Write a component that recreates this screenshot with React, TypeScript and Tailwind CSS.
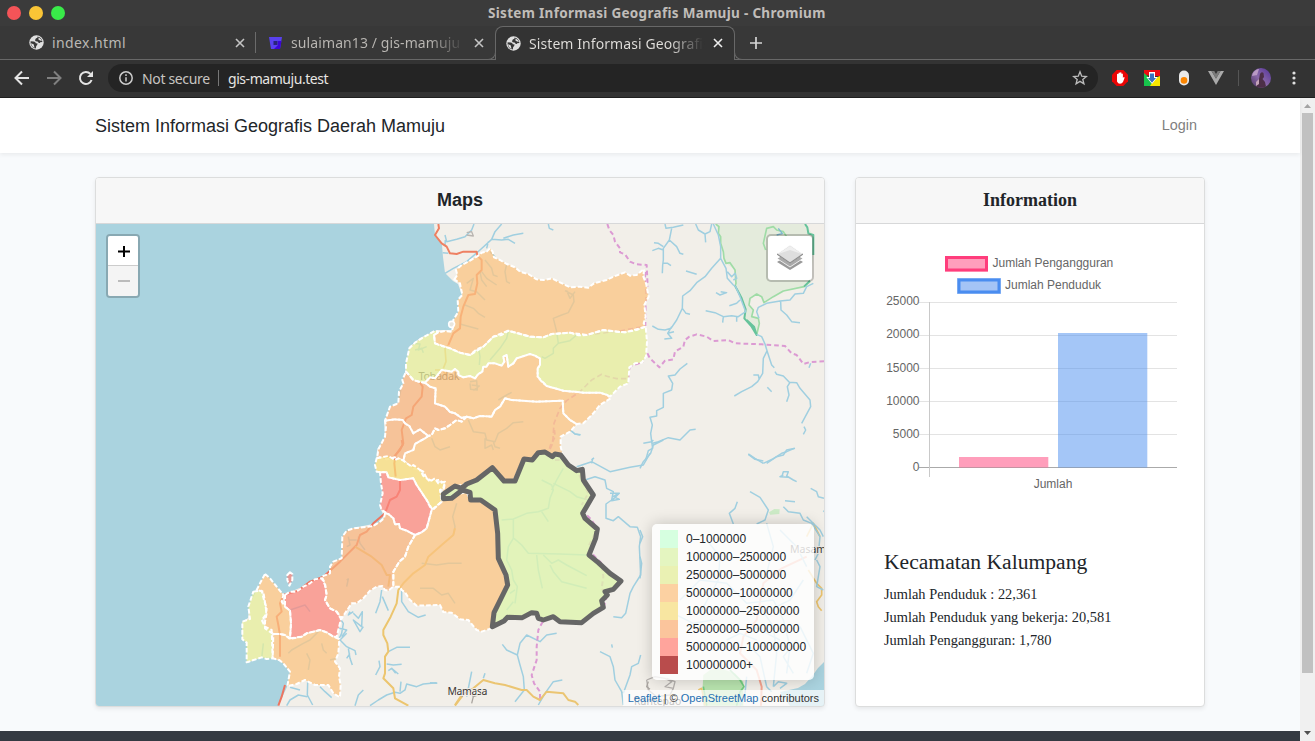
import React from 'react';

const ui = "font-['Noto_Sans',sans-serif]";
const sans = "font-['Liberation_Sans',Arial,sans-serif]";
const serif = "font-['Liberation_Serif','Times_New_Roman',serif]";

const pts = (s: string) => 'M' + s.trim().split(/\s+/).join('L');

const ORANGE = '#fbc481';
const LIME = '#e5ee9a';
const SALMON = '#f7b47d';
const YELLOW = '#f7dc7a';
const RED = '#fb877e';

const north: [string, string][] = [
  [ORANGE, '253,178 262,165 258,150 275,135 300,122 325,107 335,98 350,95 360,85 368,95 372,112 390,120 410,132 435,142 450,155 475,162 500,178 522,180 545,175 570,187 600,202 630,200 655,203 672,190 710,180 730,170 765,157 780,167 800,165 822,147 820,170 828,190 836,230 823,255 827,290 821,310 827,320 800,330 765,337 740,335 700,330 680,336 650,345 625,346 600,338 545,342 520,352 480,350 445,340 415,332 395,345 370,350 340,380 320,388 300,405 270,398 240,385 210,376 195,370 192,345 205,337 225,333 245,335 250,318 250,300 265,275 263,240 277,225 270,190'],
  [LIME, '192,345 195,370 240,385 270,398 300,405 340,380 370,350 415,332 480,350 520,352 545,342 600,338 650,345 700,330 765,337 827,320 831,365 828,410 815,428 795,430 778,442 775,490 750,500 735,515 720,530 712,525 690,518 640,518 580,512 530,498 515,485 503,470 503,445 510,435 510,415 495,407 480,402 440,415 430,430 415,440 410,405 400,410 403,425 395,437 375,430 355,430 350,440 340,440 337,455 325,462 315,475 300,468 280,472 265,465 265,455 255,447 245,455 215,450 195,475 180,472 165,488 150,486 130,480 108,455 108,430 118,385 135,368 155,355 195,332 205,335'],
  [ORANGE, '165,488 180,472 195,475 215,450 245,455 255,447 265,455 265,465 280,472 300,468 315,475 325,462 337,455 340,440 350,440 355,430 375,430 395,437 403,425 400,410 410,405 415,440 430,430 440,415 480,402 495,407 510,415 510,435 503,445 503,470 530,498 580,512 640,518 690,518 712,525 722,535 690,555 670,580 640,610 620,612 600,600 580,580 578,542 500,545 425,540 405,535 390,560 375,570 365,590 330,588 310,595 290,590 275,594 255,580 240,576 225,560 195,550 197,505 180,500'],
  [ORANGE, '290,590 310,595 330,588 365,590 375,570 390,560 405,535 425,540 500,545 578,542 580,580 600,600 620,612 600,635 572,650 572,680 578,705 545,710 520,695 485,720 460,715 430,783 402,783 367,745 320,780 290,790 255,800 220,830 212,845 218,820 225,790 205,780 190,785 170,775 160,755 150,750 130,745 100,722 105,700 130,690 135,672 165,655 175,648 185,645 195,625 205,630 225,625 240,615 260,600 275,605'],
  [SALMON, '108,455 130,480 150,486 165,488 180,500 197,505 195,550 225,560 240,576 255,580 275,594 290,590 275,605 260,600 240,615 225,625 205,630 195,625 185,645 175,648 150,628 130,640 118,618 105,610 98,600 75,598 45,602 60,560 85,550 87,515 100,490 97,480'],
  [SALMON, '45,602 75,598 98,600 105,610 118,618 130,640 150,628 175,648 165,655 135,672 130,690 105,700 100,722 75,712 50,718 22,710 25,688 45,650 48,620'],
];

const south: [string, string][] = [
  [YELLOW, '440,55 475,48 495,60 505,55 520,62 545,80 550,75 570,90 580,108 590,115 600,125 615,115 625,130 645,125 640,145 630,150 635,185 608,210 590,180 570,150 560,135 550,115 510,120 475,112 470,97 440,95 435,75'],
  [RED, '450,97 470,97 475,112 510,120 550,115 560,135 570,150 590,180 605,210 590,265 575,277 555,285 530,272 510,265 507,252 495,253 490,235 475,222 455,210 450,195 458,160 453,130'],
  [SALMON, '465,220 475,222 490,235 495,253 507,252 510,265 530,272 555,285 535,320 525,350 508,365 490,395 490,440 475,452 465,450 457,438 440,440 420,452 400,475 380,490 365,490 335,535 320,515 300,505 285,480 290,465 285,430 275,410 300,400 300,380 310,365 335,355 337,290 350,272 370,265 430,258 450,245 462,235'],
  [ORANGE, '555,285 575,277 590,265 605,210 635,185 640,178 710,155 720,180 750,182 795,210 805,355 835,435 795,515 785,565 755,575 740,570 715,540 690,538 665,518 640,516 630,495 560,497 540,480 525,457 515,450 510,440 490,440 490,395 508,365 525,350 535,320'],
  [RED, '165,465 180,455 200,455 220,440 240,430 255,418 275,415 285,435 290,465 285,480 300,505 320,515 333,537 320,590 310,590 290,577 270,570 230,580 215,590 180,595 183,550 180,512 165,500'],
  [ORANGE, '105,402 120,415 140,440 160,465 155,485 165,500 180,512 183,550 180,595 165,585 150,582 130,582 105,565 105,545 110,520 100,455 80,450 90,430'],
  [LIME, '70,455 95,452 102,480 110,505 107,525 95,540 105,560 125,570 128,655 110,657 95,652 50,667 50,608 37,598 37,545 60,537 55,500'],
  [ORANGE, '130,582 150,582 165,585 180,597 215,590 230,580 270,570 290,577 310,590 328,597 325,640 315,665 330,685 327,710 332,735 330,772 310,760 295,735 255,735 225,720 200,732 172,738 180,695 160,670 148,660 128,655'],
  [RED, '180,397 172,405 172,420 178,437 187,420 187,402'],
];

const riversNorth = [
  '225,45 230,65 260,58 285,50 305,30 312,12', '225,75 226,60', '395,12 375,35 365,58 330,90 290,125 250,145 225,160',
  '365,58 395,60 415,58 435,70', '400,55 430,45 460,40', '355,65 350,85', '535,12 538,25 550,30', '375,110 360,95', '218,98 235,100',
  '345,120 365,145 370,165 383,170', '410,132 405,155 410,185 420,190', '335,155 350,175 380,195', '330,155 335,180 350,200', '290,190 310,175 300,210 320,215 345,240',
  '285,255 310,265 325,280 345,292', '270,312 300,320 325,327', '585,212 610,225 612,245 595,278 575,285 550,295 560,335 565,370', '590,212 600,235 615,215',
  '565,370 550,385 550,400 525,415 515,410', '565,370 600,362 620,345', '415,332 410,355 390,385 360,420', '325,380 330,410 328,435',
  '125,370 150,372 145,390 170,380', '135,390 155,385 160,398', '295,600 310,635 345,640 350,660 375,665 385,640 410,625 430,608 460,605', '345,655 345,685 365,675 370,690', '370,665 375,680 390,685',
  '185,655 195,680 210,690 240,680', '385,540 410,525 425,517', '300,485 320,482 322,510 302,508 300,490', '305,495 328,498 310,512', '600,630 615,642 630,645', '665,720 672,713',
];
const riversEast = [
  '195,12 198,25 220,22 250,15', '215,25 208,60 190,85 190,120 188,135 187,160', '208,60 230,80 240,100 250,103', '190,90 175,85 157,92', '190,80 175,70 162,68', '190,130 203,130 213,137',
  '287,12 295,30 315,42 330,35 335,12', '315,42 317,67', '340,12 355,45 362,80 362,115 335,145 315,170 290,188 270,212 248,228 247,265 230,300 213,325 195,330 175,328 157,318', '247,265 258,280 270,283', '215,320 203,340 215,355 193,357', '203,340 222,335',
  '362,115 378,145 382,175 400,195 407,200 420,230 437,275 415,290 395,287 370,290 345,278 317,272', '382,155 395,170 405,160 410,175 400,180', '370,290 368,308', '410,292 410,305', '348,218 360,225 380,218 362,215', '258,153 290,163', '388,257 410,250 420,240',
  '470,343 485,350 495,372 502,395 515,435 523,443', '500,395 490,415 488,460 473,485 455,500 425,515 403,528', '478,480 475,465 460,465', '477,295 470,275 475,262 500,250 540,243 570,240 585,222 610,220 620,200 640,190', '542,245 543,270 560,285 575,305 600,308',
  '525,455 530,463 550,468 568,487 590,488 600,505 630,540 632,560 605,610', '570,487 562,500 567,525 560,545', '612,620 617,630 610,643', '502,502 515,515', '627,443 632,430',
  '262,430 240,447 225,465 205,468 218,490 215,510 190,520 190,545 190,562 170,572 170,588 150,592 157,615 152,640 155,665 158,685 145,692 137,720', '158,670 175,665 205,653 240,660 270,630 287,628',
  '445,703 465,718 490,723', '583,685 560,695 545,700 520,716 490,730',
];
const riversSouth = [
  '455,450 450,485 437,520', '457,470 475,512', '515,450 515,485 535,515 565,532 587,525', '330,535 340,550 335,580 325,600', '350,580 330,600 350,620 375,632 378,645', '355,625 360,655 367,675', '360,640 350,655', '370,515 355,525 360,515', '370,520 385,535 397,515 395,560 370,540 390,575 400,560', '327,565 350,570 335,590',
  '540,622 500,622 475,635', '470,672 490,675 515,673', '475,692 485,685 505,702', '485,685 497,700', '447,662 450,680 437,705', '180,742 210,750', '233,725 232,765 248,795', '232,770 205,765 180,780 170,797', '270,740 285,755 305,773', '400,750 385,765 375,797', '620,728 580,732 560,740 530,732 525,750 510,760 495,757 470,765 445,780 420,797', '510,755 513,725',
  '355,290 360,315 350,320', '355,300 380,300', '385,290 390,310 405,330', '350,440 355,417 350,420', '680,190 668,230 675,260 670,285', '575,370 620,375 655,370 695,370', '570,445 610,445 635,465 655,460 675,490', '175,640 185,630 220,610 240,600 270,570', '275,610 280,630 290,640', '300,660 320,655', '235,690 240,660 230,640', '180,510 225,495 240,515', '100,610 95,655',
];
const riversCentre = [
  '335,150 365,165 370,180 360,205 355,235 325,245 290,250 250,267 215,270', '365,180 380,150 400,115', '370,160 420,185 440,200 475,210', '335,245 355,275', '250,267 250,325 235,350 230,390 245,420 250,450 262,470 255,520', '252,325 275,345 295,370 390,372 470,375', '320,375 325,420 337,475', '340,375 365,400 385,390 410,405 470,437', '360,405 370,425 395,455 470,475', '255,480 240,490', '250,515 230,540',
  '425,3 435,12 452,14', '440,110 485,95 540,125 600,112 640,105 660,70', '488,85 485,100', '465,150 495,140 525,150 530,175 550,185 545,210 528,222 528,265 550,272 565,260 600,290 622,292 632,320 628,350 630,390 632,435 610,470 600,490 587,550 575,563 550,560', '540,190 568,190 545,212 568,208 550,200 565,190',
  '217,643 230,660 262,675 270,705 280,740 283,780 255,815', '262,675 270,640 290,615 330,635 350,615 380,610', '397,750 370,755 345,790 325,825', '510,665 540,680 550,710 555,750 575,785 580,825', '632,675 625,700 605,710 600,735 580,790', '545,643 547,653', '0,758 22,760', '165,730 160,745', '125,725 120,750 110,800', '40,190 75,200',
];
const riversCorner = [
  '10,10 35,5 40,0', '0,85 10,65 32,40 40,15 70,0', '325,42 345,55 370,70', '380,70 410,50 430,45 440,30 465,25', '425,112 430,95 445,95 440,108 460,120 470,125', '430,105 420,110 445,112', '330,155 360,172 385,210 375,240 350,252', '292,185 285,205 268,220 280,252', '435,182 465,185', '512,145 530,155 535,170 552,175', '430,200 445,215 480,220 490,240 515,250 540,290 535,340 525,360', '550,215 555,210',
  '0,270 8,290 0,310', '0,350 5,370 0,415', '120,480 180,420 260,430 320,490 400,480', '200,300 240,350 235,420 180,520', '380,250 400,320 380,400', '400,480 430,540 450,620 440,700', '360,500 400,560 410,640 400,740', '480,560 520,640 500,700', '470,600 430,650 460,700', '490,420 450,480 410,500', '330,620 360,650 380,740', '340,560 420,600', '100,520 160,550 220,540', '260,600 300,580 350,600', '380,740 395,755', '320,710 315,760 300,797', '400,740 415,725 440,730 420,745', '530,360 540,380 530,440 550,450', '500,230 540,270 550,290', '420,270 470,320 500,380',
];

function Strokes({ lines, color, width, dash }: { lines: string[]; color: string; width: number; dash?: string }) {
  return <path d={lines.map(pts).join('')} fill="none" stroke={color} strokeWidth={width} strokeDasharray={dash} strokeLinejoin="round" />;
}

function Regions({ items }: { items: [string, string][] }) {
  return (
    <>
      {items.map(([fill, s], i) => (
        <path key={i} d={pts(s) + 'Z'} fill={fill} fillOpacity={0.74} />
      ))}
      {items.map(([, s], i) => (
        <path key={i} d={pts(s) + 'Z'} fill="none" stroke="white" strokeWidth={6} strokeDasharray="14 6" strokeLinejoin="round" />
      ))}
    </>
  );
}

function MapDrawing() {
  const N = 'translate(370 220) scale(.33333)';
  const E = 'translate(600 220) scale(.33333)';
  const S = 'translate(230 440) scale(.33333)';
  const C = 'translate(430 430) scale(.33333)';
  const K = 'translate(640 440) scale(.33333)';
  const water = '#a0cfe0';
  const purple = '#dc9ad3';
  return (
    <svg className="block h-full w-full" viewBox="96 224 728 482">
      <rect x="96" y="224" width="728" height="482" fill="#f2efe9" />
      <path
        fill="#aad3df"
        d={pts('96,224 434,224 435,235 442,245 443,257 445,273 453,281 458,284 462,295 458,300 458,313 454,320 452,330 437,330 420,338 409,347 406,367 403,383 399,402 390,407 384,422 385,437 377,450 376,470 381,473 383,493 380,508 384,516 378,523 353,528 343,535 342,557 333,563 330,572 323,578 310,582 302,587 285,594 282,593 265,574 257,590 250,603 248,618 242,622 242,638 247,643 247,663 262,657 273,658 283,663 290,672 287,687 278,706 96,706') + 'Z'}
      />
      <path fill="#aad3df" d={pts('824,662 818,668 813,675 805,684 798,688 780,692 790,706 824,706') + 'Z'} />

      <g transform={E}>
        <path d={pts('347,12 357,40 362,70 370,95 378,130 405,150 408,190 425,235 437,268 433,295 470,345 478,310 470,290 455,290 460,270 447,255 450,235 470,222 485,230 492,248 520,230 550,213 612,200 632,180 640,100 640,45 615,12') + 'Z'} fill="#e4ebdc" />
        <Strokes lines={['347,12 357,20 355,40 362,50 362,70 370,95 372,115 378,130 390,128 405,150 408,190 405,200', '470,345 478,310 475,295 455,290 460,270 447,255 450,235 470,222 485,230 492,248 520,230 550,213 612,200 630,185', '497,90 490,70 500,25 520,20 530,30 550,35 560,50']} color="#9fdca6" width={5} />
        <Strokes lines={['405,197 412,210 425,235 437,268 433,295 455,320 470,345 462,320 440,300', '630,182 612,200', '615,12 622,22 625,40 640,45 640,105']} color="#66c39b" width={6} />
        <Strokes lines={['535,25 548,42', '530,45 548,40']} color="#80b9d0" width={4} />
      </g>
      <g transform={K}>
        <path d={pts('190,705 210,690 240,685 285,700 310,725 310,797 190,797 188,740') + 'Z'} fill="#b8e3ae" />
        <Strokes lines={['270,690 300,720 312,740 300,755 290,797', '190,740 200,797']} color="#72cc80" width={5} />
        <path d="M387 217L403 207L419 208L418 222L390 224Z" fill="#cdebc7" />
        <Strokes lines={['20,720 45,710 75,715 95,725 75,740 100,745 90,765 50,770 25,750 20,720', '80,715 105,725 100,745']} color="#b4b0ad" width={4} />
        <Strokes lines={['500,290 520,250 540,290', '505,390 530,430 545,445 545,465 530,485 535,500 545,512', '175,750 185,745 195,797']} color="#edc56f" width={5} />
        <Strokes lines={['500,350 425,385 370,430 350,540 310,590 300,640 350,690 365,740 363,797']} color="#f3a38e" width={6} />
      </g>

      <g transform={N}><Strokes lines={riversNorth} color={water} width={4.5} /></g>
      <g transform={E}><Strokes lines={riversEast} color={water} width={4.5} /></g>
      <g transform={S}><Strokes lines={riversSouth} color={water} width={4.5} /></g>
      <g transform={C}><Strokes lines={riversCentre} color={water} width={4.5} /></g>
      <g transform={K}><Strokes lines={riversCorner} color={water} width={4.5} /></g>

      <g transform={N}>
        <Strokes lines={['205,12 207,25 195,45 215,70 230,80 240,100 260,102 280,95 320,95 322,107 335,120 335,150 320,165 322,190 315,222 295,225 280,260 272,290 270,325 250,340 235,375', '150,488 158,500 155,530 130,560 125,585 108,595 95,630 100,670 90,690 72,710']} color="#ee8062" width={6} />
        <Strokes lines={['235,375 225,385 228,425 220,445', '195,450 215,450 230,465']} color="#f1b96e" width={5} />
        <Strokes lines={['290,45 310,48 305,35 290,38']} color="#b9b5b1" width={4} />
        <Strokes lines={['530,710 548,670 552,610 570,565 590,542 630,515 665,480 695,463 715,470 740,476 775,476 780,440 820,425']} color={purple} width={5} dash="16 9" />
        <Strokes lines={['650,345 735,335 827,318 828,230 826,150']} color={purple} width={4} dash="16 9" />
      </g>
      <g transform={E}>
        <Strokes lines={['22,12 28,30 40,45 45,65 60,85 60,97 75,103 90,125 110,133 140,135 143,200', '142,400 150,415 178,442 195,422 220,418 225,395 250,380 255,360 268,350 290,343 320,350 340,363 385,360 405,370 485,373 555,378 575,400 590,405 610,432 630,426 672,424']} color={purple} width={6} dash="14 9" />
      </g>
      <g transform={S}>
        <Strokes lines={['515,0 518,15 497,45 493,70 497,110', '510,120 510,150 500,170 480,180 465,220 430,250 410,275 390,285 380,315 345,350 330,365 280,410 240,425 205,452 160,465 150,490 155,515 140,530 145,555 150,585 150,650', '165,735 155,770 145,797']} color="#ed7560" width={6} />
        <Strokes lines={['375,320 425,350 455,375 470,405 480,405 475,440', '675,265 670,285 635,315 595,350 585,375 550,400 520,430 505,450 500,490 482,530 460,570 460,585 472,610 475,635 465,650 465,700 460,715 490,745 495,775 535,797', '675,797 697,768']} color="#ecc56e" width={6} />
      </g>
      <g transform={C}>
        <Strokes lines={['373,0 375,20 362,45 355,70', '338,575 325,600 320,650 320,690 305,735 312,760 330,785 330,815', '455,240 485,270 502,297 475,350 490,375 515,400 520,440 515,475 530,500 520,535', '375,90 400,90 440,120 475,190 455,225']} color={purple} width={6} dash="14 9" />
        <Strokes lines={['75,825 95,795 130,775 160,750 195,760 225,765 275,780 290,780 310,800 330,810 350,785 400,790 415,810 435,815 445,825']} color="#ebc572" width={6} />
        <Strokes lines={['120,785 130,800 125,820', '130,800 158,790', '120,775 95,800', '655,755 650,770 660,778']} color="#aaa5a0" width={4} />
      </g>

      <text x="418.5" y="380" fontSize="11" fill="#48423d" fontFamily="Noto Sans, sans-serif" textLength="41">Tobadak</text>
      <g transform={N}>
        <Regions items={north} />
        <path d="M237 318q-4-15 10-14q12 6 3 16q-9 5-13-2" fill="#e9e6de" stroke="white" strokeWidth="5" />
      </g>
      <g transform={S}><Regions items={south} /></g>
      <g transform={C}>
        <path
          d={pts('40,192 75,168 95,175 110,162 140,150 187,113 222,153 255,153 282,87 307,90 325,68 345,66 367,80 375,72 392,75 415,105 440,122 457,118 460,150 490,195 458,250 465,265 502,297 497,325 477,375 505,398 540,430 573,453 550,478 525,485 532,495 515,512 520,532 490,550 455,578 390,575 370,560 340,570 325,565 320,550 305,548 277,563 232,562 222,573 187,590 192,548 233,465 228,435 205,385 203,310 195,240 152,210 122,210 120,187 97,180 65,205 40,206') + 'Z'}
          fill="#ddf4ae" fillOpacity=".8" stroke="#666" strokeWidth="15" strokeLinejoin="round"
        />
      </g>
      <g fontFamily="Noto Sans, sans-serif" fontSize="10.5" fill="#3c3937" stroke="#f2efe9" strokeWidth="2" paintOrder="stroke">
        <text x="447.5" y="694.5" textLength="40">Mamasa</text>
        <text x="790" y="552.5">Masam</text>
        <text x="634" y="704.5">Rantepao</text>
      </g>
    </svg>
  );
}

const legend: [string, string][] = [
  ['bg-[#d6ffe0]', '0–1000000'],
  ['bg-[#e4f5c0]', '1000000–2500000'],
  ['bg-[#eaf1b3]', '2500000–5000000'],
  ['bg-[#fcd1a2]', '5000000–10000000'],
  ['bg-[#f8e6a1]', '10000000–25000000'],
  ['bg-[#fbc59c]', '25000000–50000000'],
  ['bg-[#ffa49c]', '50000000–100000000'],
  ['bg-[#b94c4c]', '100000000+'],
];

function MapPanel() {
  return (
    <section className="flex h-[530px] w-[730px] flex-col overflow-hidden rounded border border-[#dcdddd] bg-white shadow-[0_2px_4px_rgba(0,0,0,0.075)]">
      <h2 className="flex h-[46px] shrink-0 items-center justify-center border-b border-[#d7d8d9] bg-[#f7f7f7] text-[18px] font-bold">Maps</h2>
      <div className="relative h-[482px]">
        <MapDrawing />
        <div className="absolute left-[10px] top-[10px] flex w-[34px] flex-col overflow-hidden rounded border-2 border-black/20 bg-clip-padding">
          <span className="flex h-[30px] items-center justify-center border-b border-[#ccc] bg-white">
            <svg width="14" height="14" viewBox="0 0 14 14" fill="black"><path d="M2 6.5h12v2H2ZM7 2h2v11H7Z" /></svg>
          </span>
          <span className="flex h-[30px] items-center justify-center bg-[#f4f4f4]">
            <svg width="14" height="14" viewBox="0 0 14 14" fill="#bbb"><path d="M2 6h12v2H2Z" /></svg>
          </span>
        </div>
        <div className="absolute right-[10px] top-[10px] flex h-[48px] w-[48px] items-center justify-center rounded-[5px] border-2 border-black/20 bg-white bg-clip-padding">
          <svg width="26" height="26" viewBox="0 0 26 26">
            <path d="M0 17L13 9L26 17L13 25Z" fill="#999" />
            <path d="M0 13.5L13 5.5L26 13.5L13 22Z" fill="#aaa" stroke="white" strokeWidth=".8" />
            <path d="M0 9L13 0L26 9L13 18Z" fill="#dedede" stroke="white" strokeWidth=".8" />
            <path d="M0 9L13 18L26 9" fill="none" stroke="#8d8d8d" strokeWidth="1.1" />
            <path d="M1 9L13 1L25 9L13 5Z" fill="#efefef" />
          </svg>
        </div>
        <div className="absolute bottom-[26px] right-[10px] flex w-[162px] flex-col rounded-[5px] bg-white/80 px-2 py-[6px] text-[12px] leading-[18px] shadow-[0_0_15px_rgba(0,0,0,0.2)]">
          {legend.map(([c, label]) => (
            <div key={label} className="flex h-[18px] gap-2 whitespace-nowrap">
              <i className={`block h-[18px] w-[18px] shrink-0 ${c}`} />
              <span>{label}</span>
            </div>
          ))}
        </div>
        <div className="absolute bottom-0 right-0 h-[16px] whitespace-nowrap bg-white/70 px-[5px] text-[11px] leading-[16px] text-[#333]">
          <span className="text-[#1f6fb2]">Leaflet</span> | © <span className="text-[#1f6fb2]">OpenStreetMap</span> contributors
        </div>
      </div>
    </section>
  );
}

const ticks: [string, number, number][] = [['25000', 302.5, 305], ['20000', 335.5, 338], ['15000', 368.5, 372], ['10000', 401.5, 405], ['5000', 434.5, 438], ['0', 467.5, 471]];

function Chart() {
  return (
    <svg className="block h-[276px] w-[348px]" viewBox="856 224 348 276" fontFamily="Liberation Sans, Arial, sans-serif" fontSize="12" fill="#666">
      <rect x="945" y="256" width="43" height="15.5" fill="#ff9ebc" />
      <rect x="946.5" y="257.5" width="40" height="12.5" fill="#ff9ebc" stroke="#ff3d7c" strokeWidth="3" />
      <text x="992.5" y="267">Jumlah Pengangguran</text>
      <rect x="957" y="278" width="44" height="16" fill="#a4c4f6" />
      <rect x="959" y="280" width="40" height="12" fill="#a4c4f6" stroke="#4a8df0" strokeWidth="3" />
      <text x="1005" y="289">Jumlah Penduduk</text>
      {ticks.map(([label, y, baseline]) => (
        <g key={label}>
          <path d={`M919 ${y}H1177`} stroke={label === '0' ? '#aaa' : '#e3e3e3'} />
          <text x="919.5" y={baseline} textAnchor="end">{label}</text>
        </g>
      ))}
      <path d="M929.5 302V477" stroke="#c9c9c9" />
      <rect x="959" y="457" width="89.3" height="10.5" fill="#ff6391" fillOpacity=".62" />
      <rect x="1058" y="333" width="89.3" height="134.5" fill="#4a8df0" fillOpacity=".5" />
      <text x="1053" y="488" textAnchor="middle">Jumlah</text>
    </svg>
  );
}

function Globe() {
  return (
    <svg className="shrink-0" width="15" height="15" viewBox="0 0 15 15">
      <circle cx="7.5" cy="7.5" r="7.2" fill="#e0e0e0" />
      <path d="M1.6 6.3L4.6 6.4Q6.6 6.6 6.8 8.2L8.6 8.6Q8.4 10.6 7.2 11L6.8 13.4Q2 13 1.6 8ZM6 5.2Q6.4 3 8.4 2.8L8.6 1.6Q13 3 13.4 7L11.2 7.2Q10.6 8.8 9.4 7.6L8.6 6.6Q6.4 6.8 6 5.2Z" fill="#383838" />
      <path d="M2 8.2L4.6 9.2L5.6 12.8Q2.6 12 2 8.2ZM9.6 2.4Q12.4 3.6 13 6L11 5.4L9.4 4.4Z" fill="#e0e0e0" />
    </svg>
  );
}

function Cross({ color }: { color: string }) {
  return <svg className="shrink-0" width="10" height="10" viewBox="0 0 10 10" stroke={color} strokeWidth="1.6"><path d="M1 1L9 9M9 1L1 9" /></svg>;
}

function BrowserChrome() {
  return (
    <header className={`${ui} shrink-0`}>
      <div className="relative flex h-[26px] items-center bg-[#3b3b3b] pl-[7px]">
        <div className="flex gap-2">
          <i className="h-[14px] w-[14px] rounded-full bg-[#f45458]" />
          <i className="h-[14px] w-[14px] rounded-full bg-[#fac536]" />
          <i className="h-[14px] w-[14px] rounded-full bg-[#39ea49]" />
        </div>
        <div className="ml-[423px] whitespace-nowrap text-[13.5px] font-bold tracking-[0.31px] text-[#c0bdb9]">Sistem Informasi Geografis Mamuju - Chromium</div>
      </div>
      <div className="flex h-[34px] items-center border-b border-[#686868] bg-[#383838] text-[14px] text-[#bbb8b4]">
        <div className="flex w-[255px] shrink-0 items-center pl-[29px] pr-[10px]">
          <Globe /><span className="ml-2 flex-1 tracking-[0.4px]">index.html</span><Cross color="#c4c4c4" />
        </div>
        <i className="h-[21px] w-px shrink-0 bg-[#6b6b6b]" />
        <div className="flex w-[239px] shrink-0 items-center pl-[12px] pr-[11px]">
          <svg className="shrink-0" width="15" height="14" viewBox="0 0 15 14"><path d="M1 1h13l-2 12H3Z" fill="#5941ee" /><path d="M5.5 5h4v4h-4Z" fill="#29237a" /><path d="M10 5h3.5L12 13H6l4-4Z" fill="#3c05d7" /></svg>
          <span className="ml-[8px] w-[173px] overflow-hidden whitespace-nowrap bg-[linear-gradient(90deg,#bbb8b4_80%,#383838_100%)] bg-clip-text tracking-[0.1px] text-transparent">sulaiman13 / gis-mamuju /</span>
          <span className="ml-auto"><Cross color="#c4c4c4" /></span>
        </div>
        <div className="relative flex h-[34px] w-[240px] shrink-0 items-center self-start rounded-t-[8px] border border-b-0 border-[#686868] bg-[#333] pb-[1px] pl-[10px] pr-[11px] text-[#e2e0dd]">
          <i className="absolute -left-[8px] bottom-0 h-2 w-2 rounded-br-[8px] border-b border-r border-[#686868] bg-[#383838]" />
          <i className="absolute -right-[8px] bottom-0 h-2 w-2 rounded-bl-[8px] border-b border-l border-[#686868] bg-[#383838]" />
          <Globe />
          <span className="ml-2 w-[176px] overflow-hidden whitespace-nowrap bg-[linear-gradient(90deg,#e2e0dd_80%,#333_99%)] bg-clip-text tracking-[0.08px] text-transparent">Sistem Informasi Geografis</span>
          <span className="ml-auto"><Cross color="#eee" /></span>
        </div>
        <svg className="ml-[15px]" width="12" height="12" viewBox="0 0 12 12" stroke="#d5d5d5" strokeWidth="1.7"><path d="M0 6h12M6 0v12" /></svg>
      </div>
      <div className="flex h-[38px] items-center border-b border-[#202020] bg-[#333] pb-[1px] pl-[14px] pr-[14px]">
        <svg width="16" height="16" viewBox="0 0 16 16" fill="none" stroke="#e4e4e4" strokeWidth="2"><path d="M15 8H2M8 1.5L1.5 8L8 14.5" /></svg>
        <svg className="ml-4" width="16" height="16" viewBox="0 0 16 16" fill="none" stroke="#808080" strokeWidth="2"><path d="M1 8h13M8 1.5L14.5 8L8 14.5" /></svg>
        <svg className="ml-4" width="16" height="16" viewBox="0 0 16 16" fill="none" stroke="#e4e4e4" strokeWidth="2"><path d="M13.6 10A6 6 0 1 1 12.4 3.9" /><path d="M15 1V7H9Z" fill="#e4e4e4" stroke="none" /></svg>
        <div className="ml-[14px] flex h-7 w-[990px] items-center rounded-full bg-[#242424] pl-[11px] pr-[10px] text-[14px]">
          <svg width="14" height="14" viewBox="0 0 14 14" fill="none" stroke="#ccc" strokeWidth="1.5"><circle cx="7" cy="7" r="6.2" /><path d="M7 6.2v4.3M7 3.2v1.7" /></svg>
          <span className="ml-[9px] w-[76px] whitespace-nowrap tracking-[-0.35px] text-[#c8c5c1]">Not secure</span>
          <i className="ml-0 h-4 w-px bg-[#777]" />
          <span className="ml-[9px] flex-1 tracking-[-0.45px] text-[#e7e5e2]">gis-mamuju.test</span>
          <svg width="16" height="16" viewBox="0 0 24 24" fill="none" stroke="#bcbcbc" strokeWidth="2"><path d="M12 2.8l2.6 6.4 6.9.5-5.3 4.4 1.7 6.7-5.9-3.7-5.9 3.7 1.7-6.7L2.5 9.7l6.9-.5Z" /></svg>
        </div>
        <svg className="ml-[14px]" width="16" height="16" viewBox="0 0 16 16"><path d="M4.7 0h6.6L16 4.7v6.6L11.3 16H4.7L0 11.3V4.7Z" fill="#ea0505" /><path d="M5 8V4.2a.8.8 0 0 1 1.5 0V3a.8.8 0 0 1 1.5 0V2.7a.8.8 0 0 1 1.5 0V4a.8.8 0 0 1 1.4 0V8l.8-1 1 .5L11 12q-1 1.7-3 1.7T5 11.5Z" fill="white" /></svg>
        <svg className="ml-4" width="16" height="16" viewBox="0 0 16 16"><path d="M0 0h16v6H8L0 5Z" fill="#ed0c13" /><path d="M0 3l8 7-1 6H0Z" fill="#17c54c" /><path d="M16 6v10H6l5-8Z" fill="#f7e700" /><path d="M5 2h6v5h2.7L8 14 2.3 7H5Z" fill="white" /><path d="M6 3.5h4v4.5h2L8 12.7 4 8h2Z" fill="#3972bd" /></svg>
        <svg className="ml-4" width="16" height="16" viewBox="0 0 16 16"><rect x="3" y=".5" width="10" height="15" rx="5" fill="#e9e9e9" /><circle cx="8" cy="10.4" r="3.3" fill="#fb8500" /></svg>
        <svg className="ml-4" width="16" height="16" viewBox="0 0 16 16"><path d="M0 1h3.5L8 8.5 12.5 1H16L8 15Z" fill="#aaa" /><path d="M3.5 1H6.3L8 4 9.7 1h2.8L8 8.7Z" fill="#7c7c7c" /></svg>
        <i className="ml-[14px] h-4 w-px bg-[#555]" />
        <svg className="ml-[12px]" width="20" height="20" viewBox="0 0 20 20">
          <defs><linearGradient id="avatar" x1="0" y1="1" x2="1" y2="0"><stop stopColor="#4c3560" /><stop offset=".45" stopColor="#8a68a8" /><stop offset="1" stopColor="#54339a" /></linearGradient></defs>
          <circle cx="10" cy="10" r="10" fill="url(#avatar)" />
          <path d="M2 5Q5 1 8 1L6 7 1 8Z" fill="#b99ac4" />
          <path d="M9 6Q10.5 3 12.5 5L13 9 11.5 11 14 14 15 18.5Q10 21 5 18.5L8 11Z" fill="#4c2f48" />
          <path d="M5 14L8 11L8 16L5 18Z" fill="#c4a3b8" />
        </svg>
        <svg className="ml-auto mr-[5px]" width="4" height="14" viewBox="0 0 4 14" fill="#e0e0e0"><circle cx="2" cy="2" r="1.6" /><circle cx="2" cy="7" r="1.6" /><circle cx="2" cy="12" r="1.6" /></svg>
      </div>
    </header>
  );
}

export default function App() {
  return (
    <div className={`${sans} flex h-[741px] w-[1315px] flex-col overflow-hidden text-[#212529]`}>
      <BrowserChrome />
      <div className="flex min-h-0 flex-1">
        <div className="flex w-[1300px] flex-col bg-[#f8fafc]">
          <nav className="z-10 flex h-[55px] shrink-0 items-center justify-between bg-white pl-[95px] pr-[103px] shadow-[0_2px_4px_rgba(0,0,0,0.06)]">
            <span className="pt-[2px] text-[18px]">Sistem Informasi Geografis Daerah Mamuju</span>
            <span className="text-[14.4px] text-[#808080]">Login</span>
          </nav>
          <main className="flex h-[578px] shrink-0 gap-[30px] pl-[95px] pt-6">
            <MapPanel />
            <section className={`${serif} flex h-[530px] w-[350px] flex-col overflow-hidden rounded border border-[#dcdddd] bg-white shadow-[0_2px_4px_rgba(0,0,0,0.075)]`}>
              <h2 className="flex h-[46px] shrink-0 items-center justify-center border-b border-[#d7d8d9] bg-[#f7f7f7] text-[18px] font-bold">Information</h2>
              <Chart />
              <div className="pl-7 pt-[47px]">
                <h3 className="text-[21.6px] leading-[30px]">Kecamatan Kalumpang</h3>
                <div className="mt-[6px] text-[14.4px] leading-[23px]">
                  <p>Jumlah Penduduk : 22,361</p>
                  <p>Jumlah Penduduk yang bekerja: 20,581</p>
                  <p>Jumlah Pengangguran: 1,780</p>
                </div>
              </div>
            </section>
          </main>
          <footer className="flex-1 bg-[#343a42]" />
        </div>
        <div className="flex w-[15px] flex-col items-center bg-[#f0f0f0]">
          <svg width="15" height="15" viewBox="0 0 15 15"><path d="M4 10h7L7.5 6Z" fill="#a3a3a3" /></svg>
          <i className="h-[560px] w-[11px] bg-[#c1c1c1]" />
          <svg className="mt-auto" width="15" height="15" viewBox="0 0 15 15"><path d="M4 5h7L7.5 9Z" fill="#505050" /></svg>
        </div>
      </div>
    </div>
  );
}
